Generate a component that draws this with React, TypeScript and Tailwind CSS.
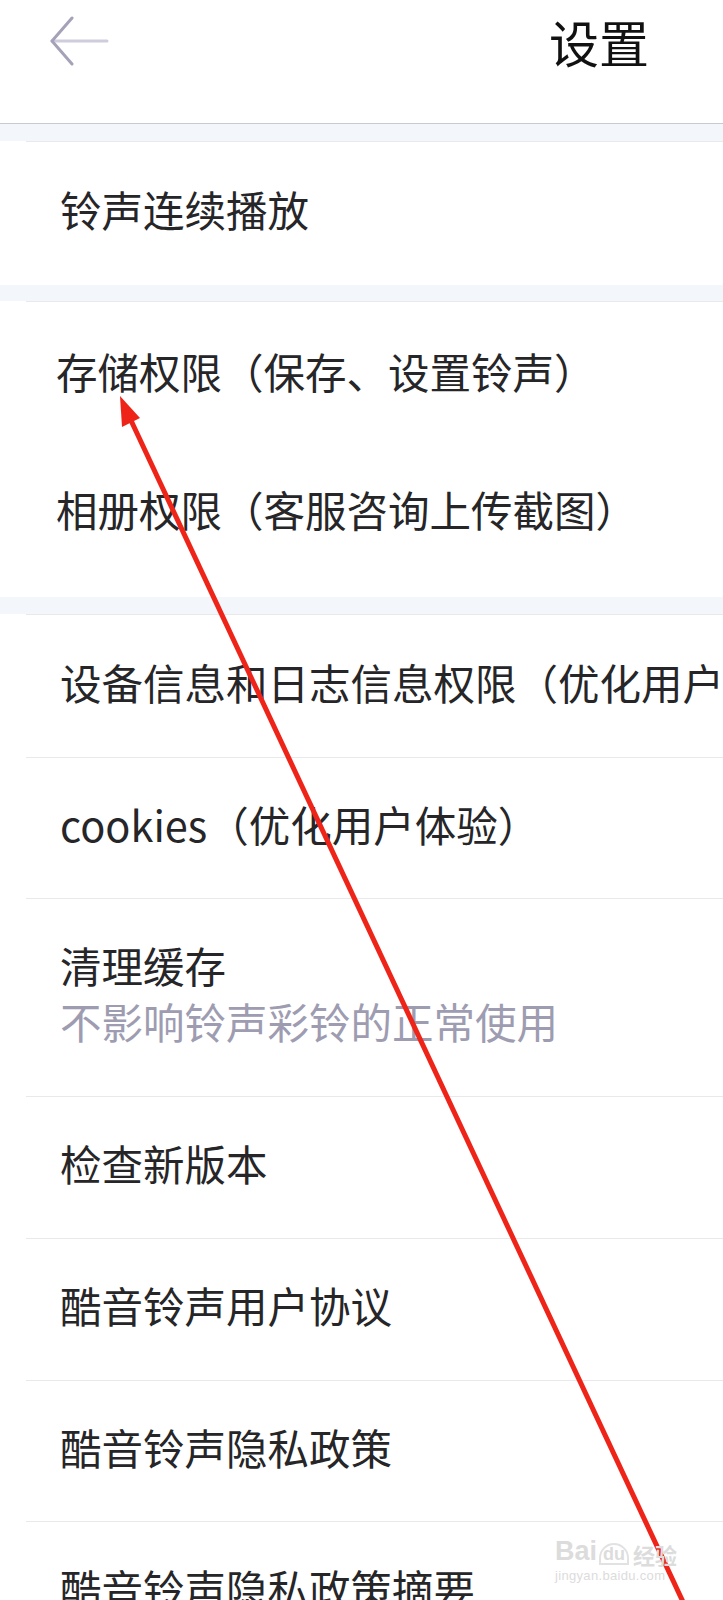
const font = "font-['Noto_Sans_CJK_SC','Noto_Sans',sans-serif]";

function Row({ h, children, pl = "pl-[60px]", line = true }: { h: string; children: React.ReactNode; pl?: string; line?: boolean }) {
  return (
    <div className={`relative flex items-center pb-[8px] ${h} ${pl}`}>
      {line && <div className="absolute left-[26px] right-0 top-0 h-px bg-[#e9e9ec]" />}
      <div className="whitespace-nowrap text-[41.5px] leading-[56px] text-[#262629]">{children}</div>
    </div>
  );
}

function BackArrow() {
  return (
    <svg width="60" height="50" viewBox="0 0 60 50" className="ml-[49px]">
      <line x1="3" y1="25" x2="58" y2="25" stroke="#cfcddb" strokeWidth="3" strokeLinecap="round" />
      <polyline points="23,2 3,25 23,48" fill="none" stroke="#a5a2b8" strokeWidth="3" strokeLinecap="round" strokeLinejoin="round" />
    </svg>
  );
}

export default function App() {
  return (
    <div className={`relative w-full min-h-[1600px] overflow-hidden bg-white ${font}`}>
      {/* header */}
      <header className="h-[124px] border-b border-[#c6cbd2] bg-white">
        <div className="flex h-[82px] items-center justify-between">
          <BackArrow />
          <h1 className="mr-[74px] text-[50px] leading-none text-[#111]">设置</h1>
        </div>
      </header>

      <div className="h-[17px] bg-[#f3f6fa]" />
      <Row h="h-[144px]">铃声连续播放</Row>

      <div className="h-[16px] bg-[#f3f6fa]" />
      <div className="relative">
        <Row h="h-[148px]" pl="pl-[56px]">存储权限（保存、设置铃声）</Row>
        <Row h="h-[128px]" pl="pl-[56px]" line={false}>相册权限（客服咨询上传截图）</Row>
        <div className="h-[20px]" />
      </div>

      <div className="h-[17px] bg-[#f3f6fa]" />
      <Row h="h-[143px]">设备信息和日志信息权限（优化用户</Row>
      <Row h="h-[141px]">cookies（优化用户体验）</Row>
      <div className="relative flex h-[198px] items-center pb-[8px] pl-[60px]">
        <div className="absolute left-[26px] right-0 top-0 h-px bg-[#e9e9ec]" />
        <div className="whitespace-nowrap text-[41.5px] leading-[56px]">
          <div className="text-[#262629]">清理缓存</div>
          <div className="text-[#9e9cb1]">不影响铃声彩铃的正常使用</div>
        </div>
      </div>
      <Row h="h-[142px]">检查新版本</Row>
      <Row h="h-[142px]">酷音铃声用户协议</Row>
      <Row h="h-[141px]">酷音铃声隐私政策</Row>
      <Row h="h-[141px]">酷音铃声隐私政策摘要</Row>

      {/* annotation arrow */}
      <svg className="pointer-events-none absolute left-0 top-0" width="723" height="1600" viewBox="0 0 723 1600">
        <line x1="128" y1="414" x2="684" y2="1604" stroke="#ee2419" strokeWidth="5" />
        <polygon points="120,396 140,418 122,427" fill="#ee2419" />
      </svg>

      {/* watermark */}
      <div className="pointer-events-none absolute left-[555px] top-[1538px] flex flex-col items-start font-['Liberation_Sans',sans-serif] text-[#dcdcdc]">
        <div className="flex items-end text-[27px] font-bold leading-none">
          <span>Bai</span>
          <span className="ml-[2px] rounded-t-full border-2 border-[#e2e2e2] px-[2px] text-[18px]">du</span>
          <span className={`ml-[4px] text-[22px] ${font}`}>经验</span>
        </div>
        <div className="mt-[4px] text-[13px] leading-none tracking-wide">jingyan.baidu.com</div>
      </div>
    </div>
  );
}
